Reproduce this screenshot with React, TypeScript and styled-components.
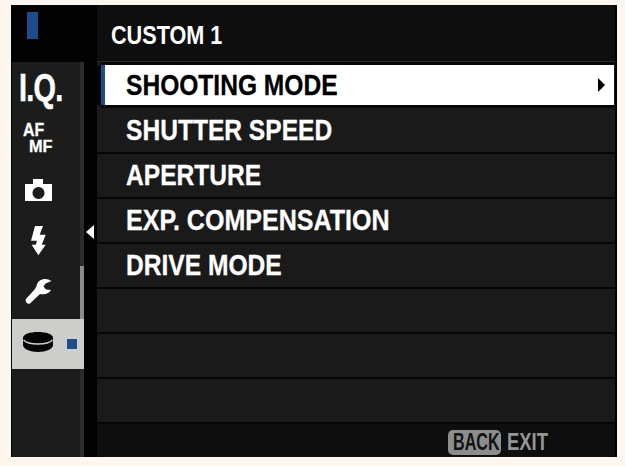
import React from "react";
import styled, { createGlobalStyle } from "styled-components";

const Global = createGlobalStyle`
  html, body { margin: 0; padding: 0; background: #fdf6ee; }
  body { font-family: "Liberation Sans", Arial, sans-serif; }
`;
const Page = styled.div`
  width: 625px; height: 466px; box-sizing: border-box; padding: 5px 8px 9px 11px; overflow: hidden;
`;
const Frame = styled.div`
  width: 606px; height: 452px; background: #020202; display: flex; box-sizing: border-box; padding-left: 1px;
`;
const Side = styled.div`
  width: 72px; display: flex; flex-direction: column; flex: none;
`;
const SideTop = styled.div`
  height: 57px; flex: none; padding: 7px 0 0 15px; box-sizing: border-box;
`;
const Mark = styled.div`
  width: 11px; height: 27px; background: #1c4c8c;
`;
const Tabs = styled.div`
  position: relative; flex: 1; background: #1b1c1b; border-right: 4px solid #2b2b2b; box-sizing: border-box; width: 72px;
  display: flex; flex-direction: column;
`;
const Thumb = styled.div`
  position: absolute; left: 68px; top: 204px; width: 4px; height: 54px; background: #8b8b8b;
`;
const Tab = styled.div<{ $pad: number }>`
  height: 51px; width: 68px; flex: none; display: flex; align-items: center; padding-left: ${p => p.$pad}px; box-sizing: border-box;
  color: #fff; font-weight: 700;
`;
const ActiveTab = styled.div`
  position: relative; z-index: 1; margin-top: 2px; width: 72px; height: 50px; flex: none; background: #cdcecc;
  display: flex; align-items: center; padding-left: 11px; gap: 14px; box-sizing: border-box;
`;
const Square = styled.div`
  width: 10px; height: 10px; background: #1c4c8c;
`;
const IQ = styled.span`
  font-size: 39px; line-height: 1; letter-spacing: -1px; display: inline-block; transform: scaleX(0.74); transform-origin: left center;
  -webkit-text-stroke: 0.5px #fff;
`;
const AfMf = styled.div`
  display: flex; flex-direction: column; align-items: flex-start;
`;
const AfLine = styled.span`
  font-size: 19px; line-height: 16px; display: inline-block; transform: scaleX(0.84); transform-origin: left center;
  -webkit-text-stroke: 0.3px #fff;
`;
const MfLine = styled.span`
  font-size: 17px; line-height: 17px; margin-left: 6px; display: inline-block; transform: scaleX(0.96); transform-origin: left center;
  -webkit-text-stroke: 0.3px #fff;
`;
const Gutter = styled.div`
  width: 13px; flex: none; display: flex; flex-direction: column; align-items: flex-end; padding: 220px 3px 0 0; box-sizing: border-box;
`;
const LeftArrow = styled.div`
  width: 0; height: 0; border-style: solid; border-width: 7px 8px 7px 0; border-color: transparent #fff transparent transparent;
`;
const Main = styled.div`
  width: 518px; flex: none; display: flex; flex-direction: column; background: #1a1a1a;
`;
const Header = styled.div`
  height: 57px; flex: none; background: #0e0e0e; display: flex; align-items: center; padding-left: 14px; box-sizing: border-box;
  border-bottom: 1px solid #2a2a2a;
`;
const Condensed = styled.span`
  display: inline-block; transform: scaleX(0.819); transform-origin: left center; white-space: nowrap; font-weight: 700;
  -webkit-text-stroke: 0.3px currentColor;
`;
const WideCondensed = styled(Condensed)`
  transform: scaleX(0.835);
`;
const Title = styled(Condensed)`
  color: #fff; font-size: 25px; transform: scaleX(0.865); margin-top: 4px; -webkit-text-stroke: 0;
`;
const Row = styled.div`
  height: 45px; flex: none; box-sizing: border-box; display: flex; align-items: center;
  padding: 0 0 2px 29px; font-size: 30px; color: #fff;
  border-bottom: 2px solid #060606;
`;
const ActiveRow = styled.div`
  height: 40px; margin: 3px 1px 4px 4px; flex: none; box-sizing: border-box; background: #fff; color: #000; font-size: 30px;
  border-left: 4px solid #1c4c8c; display: flex; align-items: center; padding: 0 9px 0 21px; justify-content: space-between;
  box-shadow: 0 3px 0 #060606, 0 -3px 0 #060606, -4px 0 0 #060606;
`;
const RightArrow = styled.div`
  width: 0; height: 0; border-style: solid; border-width: 7px 0 7px 7px; border-color: transparent transparent transparent #000;
`;
const Footer = styled.div`
  flex: 1; background: #0e0e0e; display: flex; align-items: center; padding: 3px 66px 0 0; justify-content: flex-end; box-sizing: border-box;
`;
const Back = styled.div`
  width: 53px; height: 25px; background: #8d8d8d; color: #121212; border-radius: 5px; font-weight: 700; font-size: 23px;
  display: flex; align-items: center; padding-left: 5px; box-sizing: border-box; overflow: hidden;
`;
const Exit = styled.div`
  width: 42px; margin-left: 6px; color: #969696; font-size: 23px; font-weight: 700; line-height: 25px; white-space: nowrap;
`;
const BackLabel = styled.span`
  display: inline-block; transform: scaleX(0.7); transform-origin: left center; white-space: nowrap;
`;
const ExitLabel = styled(BackLabel)`
  transform: scaleX(0.8);
`;
const DiskSvg = styled.svg`
  margin-bottom: 4px; flex: none;
`;

const Camera = () => (
  <svg width="27" height="22" viewBox="0 0 27 22">
    <path fillRule="evenodd" fill="#fff" d="M0 5h8V0h10v5h9v17H0zM13.500 8a6 6 0 1 0 .01 0z" />
  </svg>
);
const Flash = () => (
  <svg width="16" height="30" viewBox="0 0 16 30">
    <path fill="#fff" d="M4 0h8L8.700 8.700h6l-4 10h4L7.300 29.300.7 18.700h4L6 14.700H0z" />
  </svg>
);
const Wrench = () => (
  <svg width="27" height="27" viewBox="0 0 27 27">
    <path fill="#fff" d="M26.500 3C21-1 12.500 1 11.500 8L10 11 1 21c-1.500 2 1.500 6 4 4.500L15 16c4 1 9 0 11-4l-5-.5-2.500-3 2-3z" />
  </svg>
);
const Disk = () => (
  <DiskSvg width="30" height="20" viewBox="0 0 30 20">
    <path fill="#050505" d="M0 6C0 2 7 0 15 0s15 2 15 6v7c0 4-7 7-15 7S0 17 0 13z" />
    <path fill="none" stroke="#cdcecc" strokeWidth="1.500" d="M.5 8C3 11 9 12 15 12s12-1 14.500-4" />
  </DiskSvg>
);

export default function App() {
  return (
    <Page>
      <Global />
      <Frame>
        <Side>
          <SideTop><Mark /></SideTop>
          <Tabs>
            <Thumb />
            <Tab $pad={7}><IQ>I.Q.</IQ></Tab>
            <Tab $pad={11}><AfMf><AfLine>AF</AfLine><MfLine>MF</MfLine></AfMf></Tab>
            <Tab $pad={13}><Camera /></Tab>
            <Tab $pad={19}><Flash /></Tab>
            <Tab $pad={13}><Wrench /></Tab>
            <ActiveTab><Disk /><Square /></ActiveTab>
          </Tabs>
        </Side>
        <Gutter><LeftArrow /></Gutter>
        <Main>
          <Header><Title>CUSTOM 1</Title></Header>
          <ActiveRow><Condensed>SHOOTING MODE</Condensed><RightArrow /></ActiveRow>
          <Row><Condensed>SHUTTER SPEED</Condensed></Row>
          <Row><Condensed>APERTURE</Condensed></Row>
          <Row><WideCondensed>EXP. COMPENSATION</WideCondensed></Row>
          <Row><Condensed>DRIVE MODE</Condensed></Row>
          <Row />
          <Row />
          <Row />
          <Footer>
            <Back><BackLabel>BACK</BackLabel></Back>
            <Exit><ExitLabel>EXIT</ExitLabel></Exit>
          </Footer>
        </Main>
      </Frame>
    </Page>
  );
}
